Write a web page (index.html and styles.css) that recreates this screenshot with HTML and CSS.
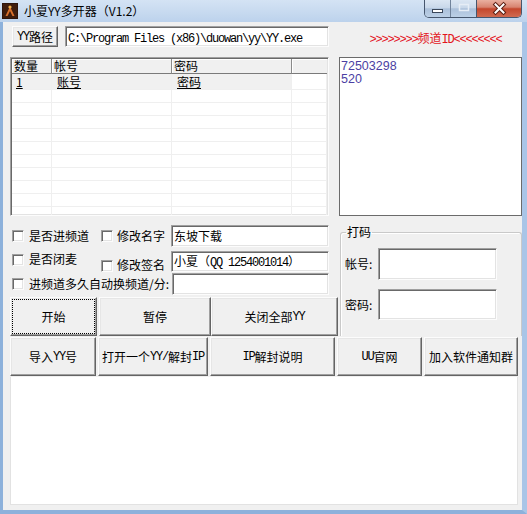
FILE: index.html
```html
<!DOCTYPE html>
<html>
<head>
<meta charset="utf-8">
<title>小夏YY多开器</title>
<link rel="stylesheet" href="styles.css">
</head>
<body>
<div class="window">
  <div class="titlebar">
    <span class="app-icon">
      <svg width="16" height="16" viewBox="0 0 16 16">
        <rect width="16" height="16" fill="#2e140b"/>
        <rect x="1" y="1" width="14" height="14" fill="#3f1d0e"/>
        <path d="M8 3.5 L12.5 13 H10.5 L8 8 L5.5 13 H3.5 Z" fill="#d9702c"/>
        <circle cx="8" cy="4" r="1.6" fill="#f3b14a"/>
      </svg>
    </span>
    <span class="title">小夏YY多开器（V1.2）</span>
    <div class="controls">
      <span class="ctl min">
        <svg width="25" height="17" viewBox="0 0 25 17"><rect x="7.5" y="9.5" width="10" height="3" fill="#fff" stroke="#3a475a"/></svg>
      </span>
      <span class="ctl max">
        <svg width="26" height="17" viewBox="0 0 26 17"><rect x="8.5" y="4.5" width="9" height="6" fill="none" stroke="#e6edf6" stroke-width="1.5"/></svg>
      </span>
      <span class="ctl close">
        <svg width="45" height="17" viewBox="0 0 45 17"><path d="M18.5 4.5 L26.5 12.5 M26.5 4.5 L18.5 12.5" stroke="#5a1e12" stroke-width="4" stroke-linecap="square"/><path d="M18.5 4.5 L26.5 12.5 M26.5 4.5 L18.5 12.5" stroke="#fff" stroke-width="2" stroke-linecap="square"/></svg>
      </span>
    </div>
  </div>

  <div class="frame">
    <div class="top">
      <div class="path-row">
        <div class="btn path-btn"><span class="m">YY</span>路径</div>
        <div class="field path-field"><span class="m">C:\Program Files (x86)\duowan\yy\YY.exe</span></div>
      </div>
      <div class="chan-label"><span class="m">&gt;&gt;&gt;&gt;&gt;&gt;&gt;&gt;</span>频道<span class="m">ID&lt;&lt;&lt;&lt;&lt;&lt;&lt;&lt;</span></div>

      <div class="listview">
        <div class="lhead">
          <div class="hcell c1">数量</div>
          <div class="hcell c2">帐号</div>
          <div class="hcell c3">密码</div>
          <div class="hcell c4"></div>
        </div>
        <div class="lrow first">
          <div class="lcell c1 sel"><u>1</u></div>
          <div class="lcell c2 sel"><u>账号</u></div>
          <div class="lcell c3 sel"><u>密码</u></div>
          <div class="lcell c4"></div>
        </div>
        <div class="lrow"><div class="lcell c1"></div><div class="lcell c2"></div><div class="lcell c3"></div><div class="lcell c4"></div></div>
        <div class="lrow"><div class="lcell c1"></div><div class="lcell c2"></div><div class="lcell c3"></div><div class="lcell c4"></div></div>
        <div class="lrow"><div class="lcell c1"></div><div class="lcell c2"></div><div class="lcell c3"></div><div class="lcell c4"></div></div>
        <div class="lrow"><div class="lcell c1"></div><div class="lcell c2"></div><div class="lcell c3"></div><div class="lcell c4"></div></div>
        <div class="lrow"><div class="lcell c1"></div><div class="lcell c2"></div><div class="lcell c3"></div><div class="lcell c4"></div></div>
        <div class="lrow"><div class="lcell c1"></div><div class="lcell c2"></div><div class="lcell c3"></div><div class="lcell c4"></div></div>
        <div class="lrow"><div class="lcell c1"></div><div class="lcell c2"></div><div class="lcell c3"></div><div class="lcell c4"></div></div>
        <div class="lrow"><div class="lcell c1"></div><div class="lcell c2"></div><div class="lcell c3"></div><div class="lcell c4"></div></div>
        <div class="lrow"><div class="lcell c1"></div><div class="lcell c2"></div><div class="lcell c3"></div><div class="lcell c4"></div></div>
        <div class="lrow"><div class="lcell c1"></div><div class="lcell c2"></div><div class="lcell c3"></div><div class="lcell c4"></div></div>
      </div>

      <div class="idbox">72503298<br>520</div>
    </div>

    <div class="mid">
      <div class="opts">
        <div class="opt-row r1">
          <div class="cbg g1"><span class="cb"></span><span class="cbl">是否进频道</span></div>
          <div class="cbg g2"><span class="cb"></span><span class="cbl">修改名字</span></div>
          <div class="field opt-field">东坡下载</div>
        </div>
        <div class="opt-row r2">
          <div class="cbg g1"><span class="cb"></span><span class="cbl">是否闭麦</span></div>
          <div class="cbg g2"><span class="cb"></span><span class="cbl">修改签名</span></div>
          <div class="field opt-field">小夏（<span class="m">QQ 1254001014</span>）</div>
        </div>
        <div class="opt-row r3">
          <div class="cbg g1"><span class="cb"></span><span class="cbl">进频道多久自动换频道/分:</span></div>
          <div class="field opt-field"></div>
        </div>
        <div class="btn-row1">
          <div class="btn b-start">开始</div>
          <div class="btn b-pause">暂停</div>
          <div class="btn b-closeall">关闭全部<span class="m">YY</span></div>
        </div>
      </div>

      <fieldset class="group">
        <legend>打码</legend>
        <div class="g-row gr1">
          <span class="g-label">帐号:</span>
          <div class="field g-field"></div>
        </div>
        <div class="g-row gr2">
          <span class="g-label">密码:</span>
          <div class="field g-field"></div>
        </div>
      </fieldset>
    </div>

    <div class="btn-row2">
      <div class="btn b-import">导入<span class="m">YY</span>号</div>
      <div class="btn b-open">打开一个<span class="m">YY/</span>解封<span class="m">IP</span></div>
      <div class="btn b-ip"><span class="m">IP</span>解封说明</div>
      <div class="btn b-uu"><span class="m">UU</span>官网</div>
      <div class="btn b-join">加入软件通知群</div>
    </div>

    <div class="log"></div>
  </div>
</div>
</body>
</html>
```

FILE: styles.css
```css
* {
  box-sizing: border-box;
  margin: 0;
  padding: 0;
}

html, body {
  width: 527px;
  height: 514px;
  overflow: hidden;
  background: #fff;
}

body {
  font-family: "Noto Sans CJK SC", "Liberation Sans", sans-serif;
  font-size: 12px;
  line-height: 14px;
  color: #000;
}

.m {
  font-family: "Liberation Mono", "Noto Sans CJK SC", monospace;
  font-size: 12px;
  letter-spacing: -1.2px;
}

.window {
  width: 527px;
  height: 514px;
  display: flex;
  flex-direction: column;
}

/* title bar */
.titlebar {
  height: 22px;
  flex: none;
  display: flex;
  align-items: flex-start;
  background: linear-gradient(to bottom, #d4e3f4 0%, #c6d9ef 60%, #bcd2ec 100%);
}

.app-icon {
  display: block;
  width: 16px;
  height: 16px;
  margin: 3px 0 0 2px;
}

.app-icon svg {
  display: block;
}

.title {
  margin: 2px 0 0 6px;
  font-size: 12px;
  line-height: 17px;
  color: #000;
}

.controls {
  margin-left: auto;
  margin-right: 5px;
  display: flex;
  height: 18px;
  border: 1px solid #46566d;
  border-top: none;
  border-radius: 0 0 5px 5px;
  overflow: hidden;
}

.ctl {
  display: block;
  height: 17px;
}

.ctl svg {
  display: block;
}

.ctl.min,
.ctl.max {
  background: linear-gradient(to bottom, #dbe6f3 0%, #c9d8ea 45%, #abc0da 52%, #bcd0e6 100%);
}

.ctl.min {
  width: 25px;
}

.ctl.max {
  width: 26px;
  border-left: 1px solid #71839b;
}

.ctl.close {
  width: 45px;
  border-left: 1px solid #46566d;
  background: linear-gradient(to bottom, #eab0a0 0%, #d88470 42%, #c4472d 52%, #d06a50 100%);
}

/* client frame */
.frame {
  flex: 1;
  background: #f0f0f0;
  border-left: 3px solid #8db1db;
  border-right: 5px solid #a9c5e7;
  border-bottom: 4px solid #8db1db;
  padding: 3px 0 5px 7px;
}

.top {
  display: grid;
  grid-template-columns: 319px 183px;
  grid-template-rows: 22px 159px;
  column-gap: 10px;
  row-gap: 10px;
}

.path-row {
  display: flex;
  align-items: flex-start;
}

.btn {
  display: flex;
  align-items: center;
  justify-content: center;
  background: #f0f0f0;
  border: 1px solid;
  border-color: #fcfcfc #646464 #646464 #fcfcfc;
  box-shadow: inset -1px -1px 0 #a0a0a0, inset 1px 1px 0 #e6e6e6;
  white-space: nowrap;
  flex: none;
}

.path-btn {
  width: 46px;
  height: 21px;
  margin: 1px 0 0 2px;
}

.field {
  background: #fff;
  border: 1px solid;
  border-color: #a0a0a0 #fcfcfc #fcfcfc #a0a0a0;
  box-shadow: inset 1px 1px 0 #696969, inset -1px -1px 0 #e3e3e3;
  white-space: nowrap;
  overflow: hidden;
  flex: none;
}

.path-field {
  width: 264px;
  height: 21px;
  margin: 1px 0 0 7px;
  padding: 3px 0 0 2px;
}

.chan-label {
  align-self: end;
  text-align: center;
  padding-left: 10px;
  color: #e3141c;
  line-height: 14px;
  white-space: nowrap;
}

/* list view */
.listview {
  background: #fff;
  border: 1px solid;
  border-color: #a0a0a0 #fcfcfc #fcfcfc #a0a0a0;
  box-shadow: inset 1px 1px 0 #696969, inset -1px -1px 0 #e3e3e3;
  padding: 1px;
  overflow: hidden;
}

.lhead {
  display: flex;
  height: 15px;
}

.hcell {
  height: 15px;
  background: #f0f0f0;
  border-right: 1px solid #8a8a8a;
  border-bottom: 1px solid #7a7a7a;
  box-shadow: inset 1px 1px 0 #fff;
  padding-left: 2px;
  line-height: 14px;
  white-space: nowrap;
}

.c1 { width: 40px; flex: none; }
.c2 { width: 120px; flex: none; }
.c3 { width: 120px; flex: none; }
.c4 { flex: 1; border-right: none; }

.lrow {
  display: flex;
  height: 13px;
}

.lrow.first {
  height: 16px;
}

.lcell {
  height: 100%;
  border-right: 1px solid #efefef;
  border-bottom: 1px solid #efefef;
  padding-left: 4px;
  line-height: 15px;
  white-space: nowrap;
}

.lcell.c2,
.lcell.c3 {
  padding-left: 5px;
}

.lcell.sel {
  background: #f0f0f0;
}

.idbox {
  background: #fff;
  border: 1px solid #6b6b6b;
  padding: 2px 0 0 1px;
  color: #4c3fa3;
  font-family: "Liberation Sans", sans-serif;
  font-size: 12.5px;
  line-height: 13px;
}

/* middle section */
.mid {
  display: flex;
  align-items: flex-start;
}

.opts {
  width: 329px;
  flex: none;
}

.opt-row {
  display: flex;
  align-items: flex-start;
  width: 319px;
  height: 22px;
  padding-left: 2px;
}

.r1 { margin-top: 9px; }
.r2 { margin-top: 3px; }
.r3 { margin-top: 1px; }

.cbg {
  display: flex;
  align-items: flex-start;
  flex: none;
}

.g1 { width: 89px; }
.r3 .g1 { width: auto; }

.cb {
  display: block;
  width: 12px;
  height: 12px;
  flex: none;
  background: #fff;
  border: 1px solid;
  border-color: #a0a0a0 #fcfcfc #fcfcfc #a0a0a0;
  box-shadow: inset 1px 1px 0 #696969, inset -1px -1px 0 #e3e3e3;
}

.g1 .cb { margin-right: 5px; }
.g2 .cb { margin-right: 4px; }

.cbl {
  line-height: 14px;
  white-space: nowrap;
}

.r1 .cb { margin-top: 5px; }
.r1 .cbl { margin-top: 4px; }
.r2 .g1 .cb { margin-top: 4px; }
.r2 .g1 .cbl { margin-top: 2px; }
.r2 .g2 .cb { margin-top: 10px; }
.r2 .g2 .cbl { margin-top: 8px; }
.r3 .cb { margin-top: 5px; }
.r3 .cbl { margin-top: 4px; }

.opt-field {
  margin-left: auto;
  width: 158px;
  height: 22px;
  padding: 3px 0 0 2px;
  line-height: 14px;
}

.r2 .opt-field {
  height: 21px;
  margin-top: 1px;
  padding-top: 2px;
}

.r3 .opt-field {
  width: 157px;
}

.btn-row1 {
  display: flex;
  margin-top: 2px;
  height: 39px;
}

.btn-row1 .btn {
  height: 39px;
}

.b-start {
  width: 87px;
  outline: 1px dotted #000;
  outline-offset: -3px;
}

.b-pause {
  width: 112px;
  margin-left: 2px;
}

.b-closeall {
  width: 127px;
}

/* group box */
.group {
  width: 182px;
  height: 111px;
  margin: 9px 0 0 1px;
  border: 1px solid #c9c9c9;
  border-bottom: none;
  border-radius: 3px 3px 0 0;
  padding: 0 0 0 4px;
  box-shadow: inset 1px 1px 0 #fff;
  flex: none;
}

.group legend {
  margin-left: 1px;
  padding: 0 1px;
  line-height: 14px;
}

.g-row {
  display: flex;
  align-items: center;
}

.gr1 { margin-top: 9px; }
.gr2 { margin-top: 9px; }

.g-label {
  width: 33px;
  flex: none;
  white-space: nowrap;
}

.g-field {
  width: 119px;
}

.gr1 .g-field { height: 32px; }
.gr2 .g-field { height: 31px; }

/* second button row */
.btn-row2 {
  display: flex;
  margin-top: 1px;
  height: 39px;
}

.btn-row2 .btn {
  height: 39px;
  margin-right: 2px;
}

.b-import { width: 86px; }
.b-open { width: 110px; }
.b-ip { width: 125px; }
.b-uu { width: 85px; }
.b-join { width: 94px; }

.log {
  width: 508px;
  height: 128px;
  margin-top: 1px;
  background: #fff;
  border: 1px solid #e2e2e2;
  border-top: none;
}
```
